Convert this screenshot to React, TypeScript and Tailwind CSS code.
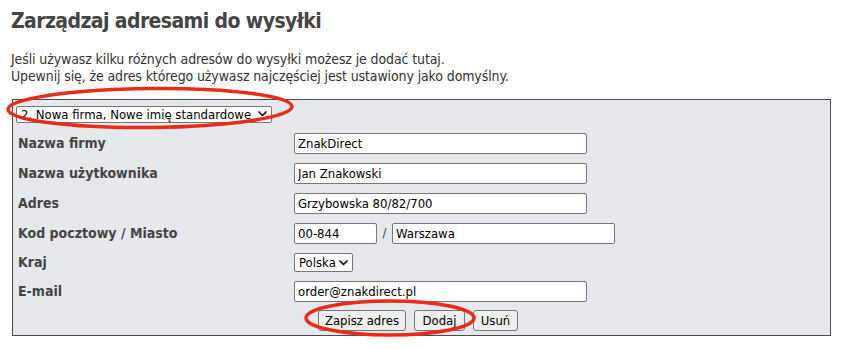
const cond = "font-['DejaVu_Sans_Condensed','DejaVu_Sans',sans-serif] [font-stretch:condensed]";

const rows = [
  { label: "Nazwa firmy", value: "ZnakDirect" },
  { label: "Nazwa użytkownika", value: "Jan Znakowski" },
  { label: "Adres", value: "Grzybowska 80/82/700" },
];

const Chevron = () => (
  <svg width="9" height="6" viewBox="0 0 9 6" className="shrink-0">
    <polyline points="1,1 4.5,4.5 8,1" fill="none" stroke="#111" strokeWidth="1.7" strokeLinecap="round" strokeLinejoin="round" />
  </svg>
);

const Field = ({ value, w }: { value: string; w: string }) => (
  <input
    readOnly
    value={value}
    className={`${w} ${cond} h-[21px] border border-[#767676] rounded-[2px] bg-white px-[3px] text-[13px] text-black outline-none`}
  />
);

const Btn = ({ children, w }: { children: string; w: string }) => (
  <button className={`${w} ${cond} h-[21px] border border-[#767676] rounded-[3px] bg-[#efefef] text-[13px] text-black leading-none`}>
    {children}
  </button>
);

const Label = ({ children }: { children: string }) => (
  <span className={`${cond} pl-[5px] text-[14px] font-bold text-[#444]`}>{children}</span>
);

export default function App() {
  return (
    <div className={`${cond} relative min-h-screen bg-white px-[11px] pt-[8px] text-[#333]`}>
      <h1 className="text-[21px] font-bold leading-[26px] tracking-[-0.6px] text-[#444]">Zarządzaj adresami do wysyłki</h1>
      <p className="mt-[17px] text-[14px] leading-[17px] tracking-[-0.12px] text-[#333]">
        Jeśli używasz kilku różnych adresów do wysyłki możesz je dodać tutaj.
        <br />
        Upewnij się, że adres którego używasz najczęściej jest ustawiony jako domyślny.
      </p>

      <div className="mt-[14px] ml-[1px] w-[819px] border border-[#4a4a4a] bg-[#e4e9ee]">
        <div className="flex h-[28px] items-center pl-[3px]">
          <div className="flex h-[17px] w-[256px] items-center justify-between rounded-[2px] border border-[#767676] bg-white pl-[4px] pr-[4px] text-[13px] text-black">
            <span className="whitespace-nowrap leading-none">2. Nowa firma, Nowe imię standardowe</span>
            <Chevron />
          </div>
        </div>

        {rows.map((r) => (
          <div key={r.label} className="grid h-[30px] grid-cols-[281px_1fr] items-center">
            <Label>{r.label}</Label>
            <Field value={r.value} w="w-[293px]" />
          </div>
        ))}

        <div className="grid h-[30px] grid-cols-[281px_1fr] items-center">
          <Label>Kod pocztowy / Miasto</Label>
          <div className="flex items-center">
            <Field value="00-844" w="w-[83px]" />
            <span className="w-[15px] text-center text-[13px] text-[#444]">/</span>
            <Field value="Warszawa" w="w-[223px]" />
          </div>
        </div>

        <div className="grid h-[29px] grid-cols-[281px_1fr] items-center">
          <Label>Kraj</Label>
          <div className="flex h-[19px] w-[59px] items-center justify-between rounded-[2px] border border-[#767676] bg-white pl-[4px] pr-[4px] text-[13px] text-black">
            <span className="leading-none">Polska</span>
            <Chevron />
          </div>
        </div>

        <div className="grid h-[29px] grid-cols-[281px_1fr] items-center">
          <Label>E-mail</Label>
          <Field value="order@znakdirect.pl" w="w-[293px]" />
        </div>

        <div className="grid h-[29px] grid-cols-[281px_1fr] items-center">
          <span />
          <div className="flex items-center gap-[8px] pl-[24px]">
            <Btn w="w-[88px]">Zapisz adres</Btn>
            <Btn w="w-[51px]">Dodaj</Btn>
            <Btn w="w-[45px]">Usuń</Btn>
          </div>
        </div>
      </div>

      <svg className="pointer-events-none absolute left-0 top-0" width="844" height="349">
        <ellipse cx="150" cy="108" rx="142" ry="19.5" fill="none" stroke="#ec2b16" strokeWidth="3.5" transform="rotate(-0.6 150 108)" />
        <ellipse cx="390" cy="318" rx="84" ry="17" fill="none" stroke="#ec2b16" strokeWidth="3.5" />
      </svg>
    </div>
  );
}
